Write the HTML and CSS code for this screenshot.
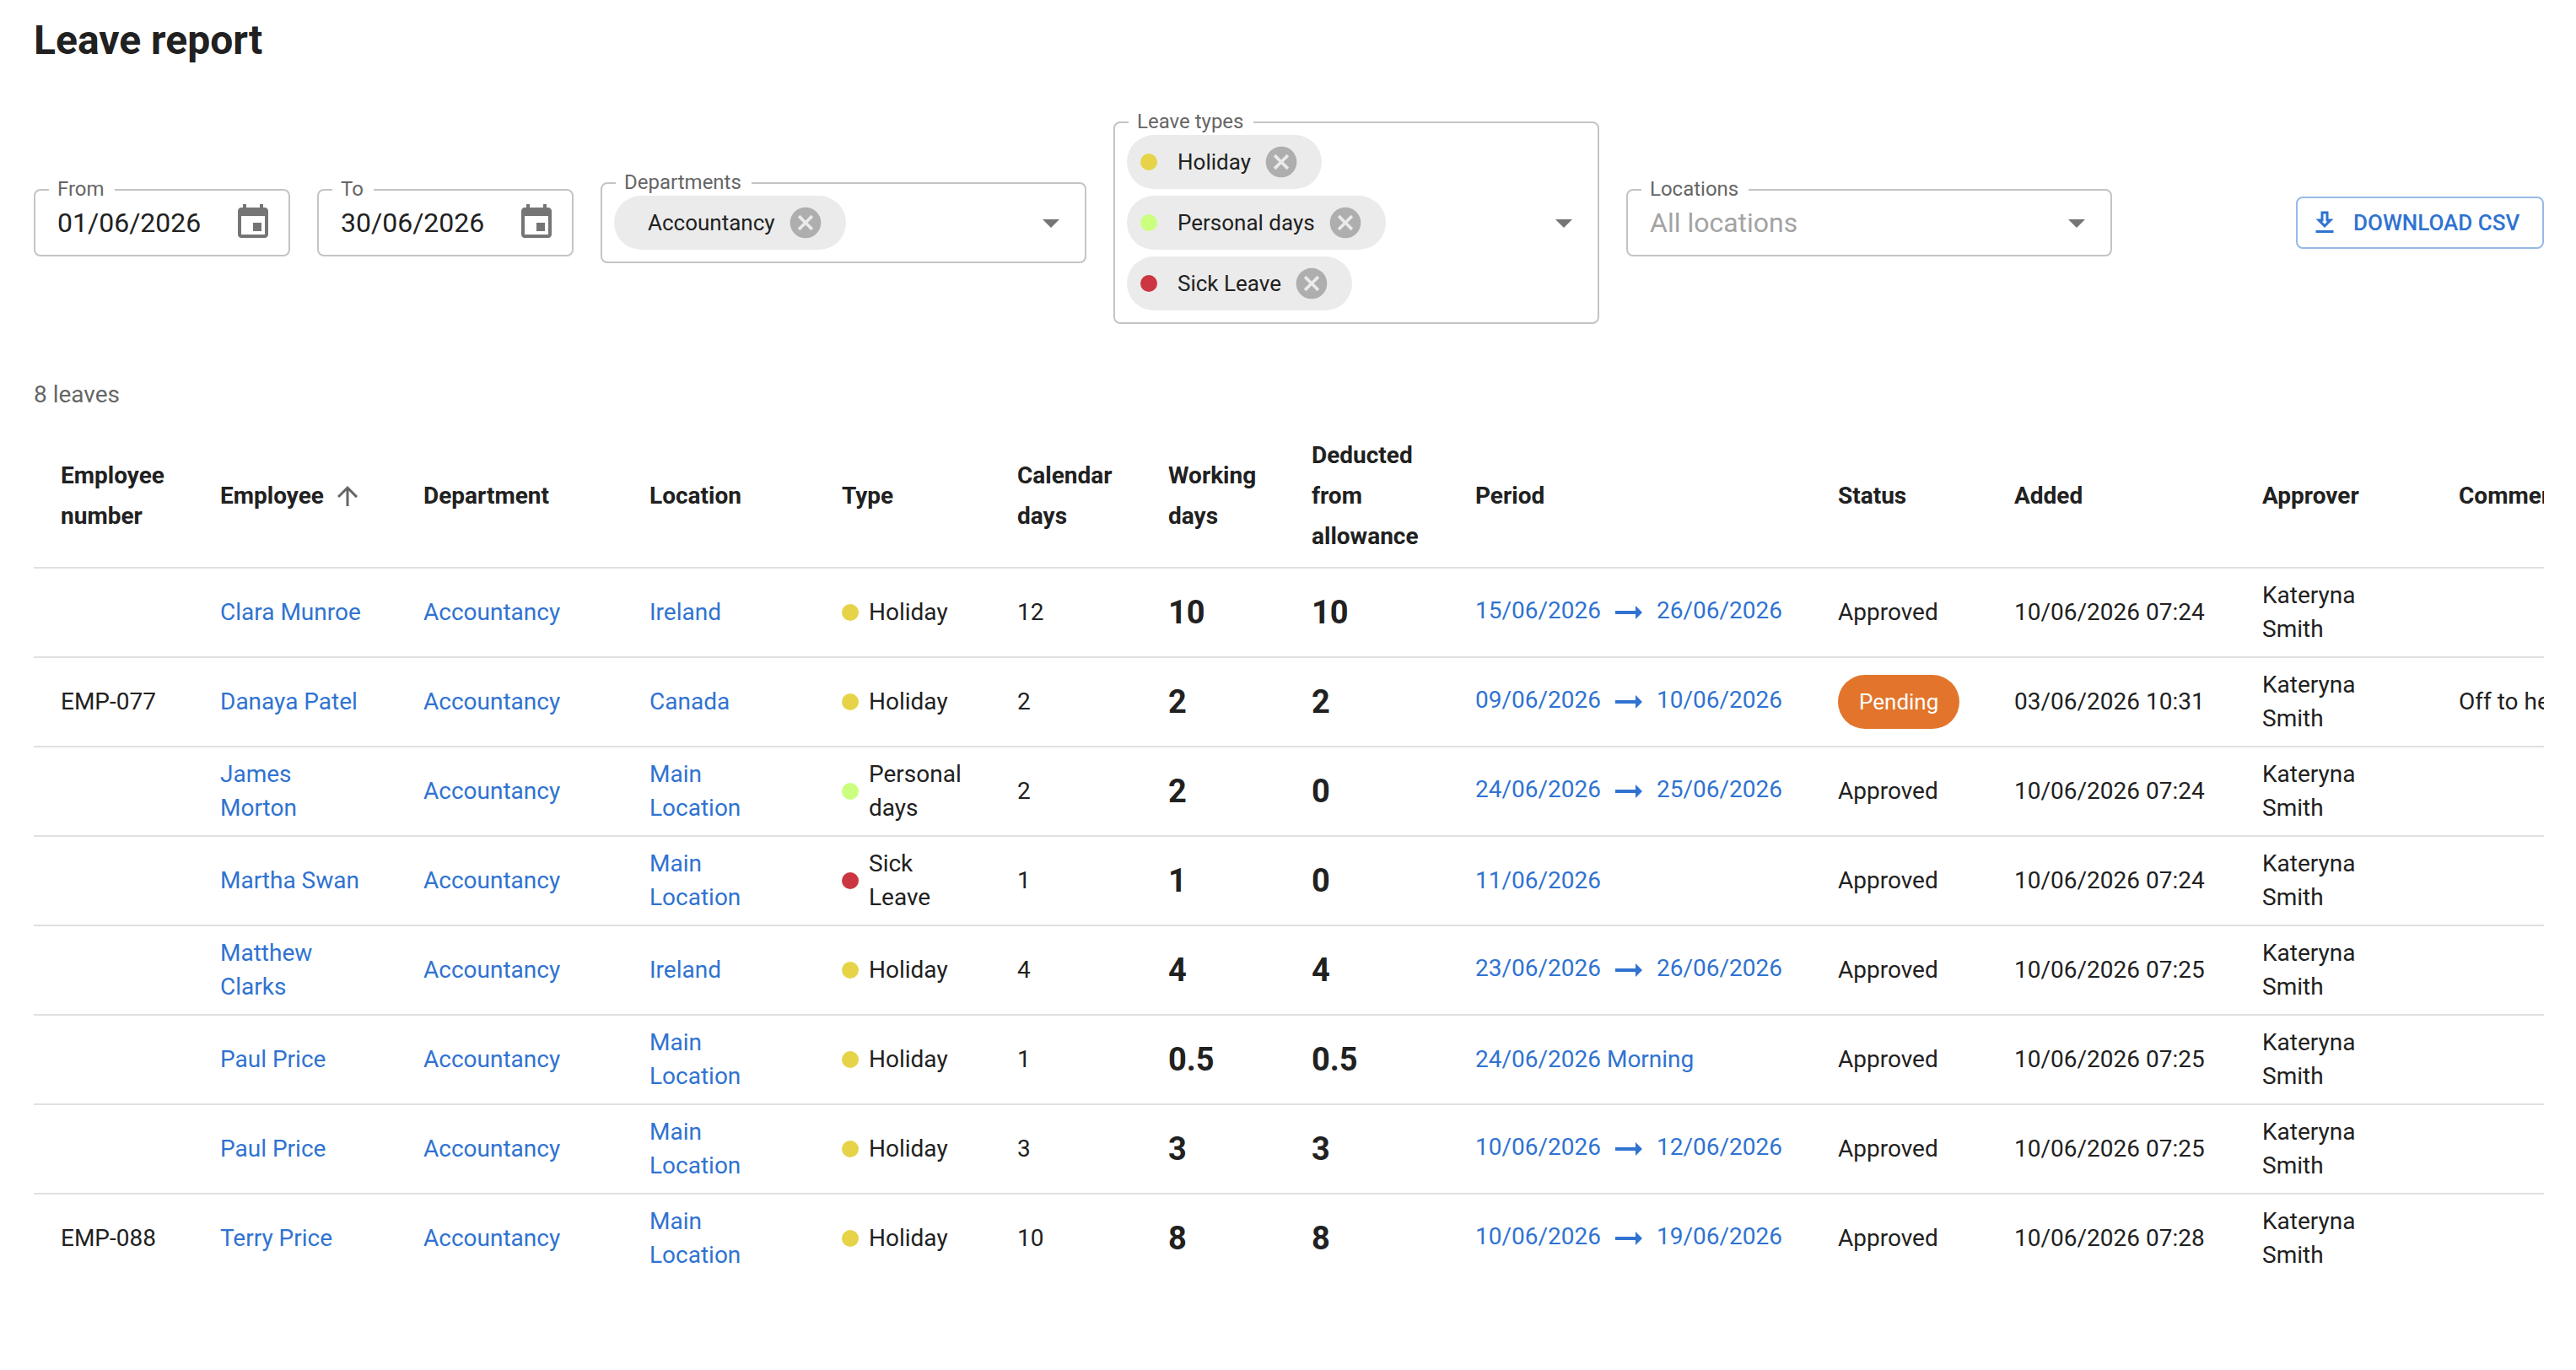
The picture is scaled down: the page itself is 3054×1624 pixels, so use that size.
FILE: index.html
```html
<!DOCTYPE html>
<html lang="en">
<head>
    <meta charset="UTF-8">
    <title>Leave report</title>
    <link rel="stylesheet" href="styles.css">
</head>
<body>

    <!-- shared icons -->
    <svg class="sprite" aria-hidden="true">
        <symbol id="icon-calendar" viewBox="0 0 24 24"><path d="M17 12h-5v5h5v-5zM16 1v2H8V1H6v2H5c-1.11 0-1.99.9-1.99 2L3 19c0 1.1.89 2 2 2h14c1.1 0 2-.9 2-2V5c0-1.1-.9-2-2-2h-1V1h-2zm3 18H5V8h14v11z"/></symbol>
        <symbol id="icon-cancel" viewBox="0 0 24 24"><path d="M12 2C6.47 2 2 6.47 2 12s4.47 10 10 10 10-4.47 10-10S17.53 2 12 2zm5 13.59L15.59 17 12 13.41 8.41 17 7 15.59 10.59 12 7 8.41 8.41 7 12 10.59 15.59 7 17 8.41 13.41 12 17 15.59z"/></symbol>
        <symbol id="icon-dropdown" viewBox="0 0 24 24"><path d="M7 10l5 5 5-5z"/></symbol>
        <symbol id="icon-download" viewBox="0 0 24 24"><path d="M19 9h-4V3H9v6H5l7 7 7-7zm-8 2V5h2v6h1.17L12 13.17 9.83 11H11zm-6 7h14v2H5v-2z"/></symbol>
        <symbol id="icon-up" viewBox="0 0 24 24"><path d="M4 12l1.41 1.41L11 7.83V20h2V7.83l5.58 5.59L20 12l-8-8-8 8z"/></symbol>
        <symbol id="icon-right" viewBox="0 0 24 24"><path d="M16.01 11H4v2h12.01v3L20 12l-3.99-4z"/></symbol>
    </svg>

    <h1>Leave report</h1>

    <form class="filters">
        <div class="field date-field">
            <label for="from">From</label>
            <input type="text" id="from" value="01/06/2026">
            <button type="button" class="icon-button" aria-label="Choose start date"><svg class="icon"><use href="#icon-calendar"/></svg></button>
        </div>

        <div class="field date-field">
            <label for="to">To</label>
            <input type="text" id="to" value="30/06/2026">
            <button type="button" class="icon-button" aria-label="Choose end date"><svg class="icon"><use href="#icon-calendar"/></svg></button>
        </div>

        <div class="field select-field">
            <label for="departments">Departments</label>
            <div class="chips">
                <span class="chip"><span class="chip-label">Accountancy</span><button type="button" aria-label="Remove Accountancy"><svg class="icon"><use href="#icon-cancel"/></svg></button></span>
            </div>
            <input type="text" id="departments">
            <button type="button" class="icon-button" aria-label="Open departments"><svg class="icon"><use href="#icon-dropdown"/></svg></button>
        </div>

        <div class="field select-field">
            <label for="types">Leave types</label>
            <div class="chips">
                <span class="chip"><span class="dot holiday"></span><span class="chip-label">Holiday</span><button type="button" aria-label="Remove Holiday"><svg class="icon"><use href="#icon-cancel"/></svg></button></span>
                <span class="chip"><span class="dot personal"></span><span class="chip-label">Personal days</span><button type="button" aria-label="Remove Personal days"><svg class="icon"><use href="#icon-cancel"/></svg></button></span>
                <span class="chip"><span class="dot sick"></span><span class="chip-label">Sick Leave</span><button type="button" aria-label="Remove Sick Leave"><svg class="icon"><use href="#icon-cancel"/></svg></button></span>
            </div>
            <input type="text" id="types">
            <button type="button" class="icon-button" aria-label="Open leave types"><svg class="icon"><use href="#icon-dropdown"/></svg></button>
        </div>

        <div class="field select-field">
            <label for="locations">Locations</label>
            <input type="text" id="locations" placeholder="All locations">
            <button type="button" class="icon-button" aria-label="Open locations"><svg class="icon"><use href="#icon-dropdown"/></svg></button>
        </div>

        <button type="button" class="download"><svg class="icon"><use href="#icon-download"/></svg>Download CSV</button>
    </form>

    <p class="count">8 leaves</p>

    <div class="table-container">
        <table>
            <colgroup>
                <col class="col-number">
                <col class="col-employee">
                <col class="col-department">
                <col class="col-location">
                <col class="col-type">
                <col class="col-calendar">
                <col class="col-working">
                <col class="col-deducted">
                <col class="col-period">
                <col class="col-status">
                <col class="col-added">
                <col class="col-approver">
                <col class="col-comment">
            </colgroup>
            <thead>
                <tr>
                    <th>Employee number</th>
                    <th><span class="sort">Employee<svg class="icon"><use href="#icon-up"/></svg></span></th>
                    <th>Department</th>
                    <th>Location</th>
                    <th>Type</th>
                    <th>Calendar days</th>
                    <th>Working days</th>
                    <th>Deducted from allowance</th>
                    <th>Period</th>
                    <th>Status</th>
                    <th>Added</th>
                    <th>Approver</th>
                    <th>Comment</th>
                </tr>
            </thead>
            <tbody>
                <tr>
                    <td></td>
                    <td><a href="#">Clara Munroe</a></td>
                    <td><a href="#">Accountancy</a></td>
                    <td><a href="#">Ireland</a></td>
                    <td><div class="type"><span class="dot holiday"></span>Holiday</div></td>
                    <td>12</td>
                    <td class="days">10</td>
                    <td class="days">10</td>
                    <td><a href="#">15/06/2026<svg class="icon arrow"><use href="#icon-right"/></svg>26/06/2026</a></td>
                    <td>Approved</td>
                    <td>10/06/2026 07:24</td>
                    <td>Kateryna Smith</td>
                    <td></td>
                </tr>
                <tr>
                    <td>EMP-077</td>
                    <td><a href="#">Danaya Patel</a></td>
                    <td><a href="#">Accountancy</a></td>
                    <td><a href="#">Canada</a></td>
                    <td><div class="type"><span class="dot holiday"></span>Holiday</div></td>
                    <td>2</td>
                    <td class="days">2</td>
                    <td class="days">2</td>
                    <td><a href="#">09/06/2026<svg class="icon arrow"><use href="#icon-right"/></svg>10/06/2026</a></td>
                    <td><span class="pending">Pending</span></td>
                    <td>03/06/2026 10:31</td>
                    <td>Kateryna Smith</td>
                    <td>Off to he</td>
                </tr>
                <tr>
                    <td></td>
                    <td><a href="#">James Morton</a></td>
                    <td><a href="#">Accountancy</a></td>
                    <td><a href="#">Main Location</a></td>
                    <td><div class="type"><span class="dot personal"></span>Personal days</div></td>
                    <td>2</td>
                    <td class="days">2</td>
                    <td class="days">0</td>
                    <td><a href="#">24/06/2026<svg class="icon arrow"><use href="#icon-right"/></svg>25/06/2026</a></td>
                    <td>Approved</td>
                    <td>10/06/2026 07:24</td>
                    <td>Kateryna Smith</td>
                    <td></td>
                </tr>
                <tr>
                    <td></td>
                    <td><a href="#">Martha Swan</a></td>
                    <td><a href="#">Accountancy</a></td>
                    <td><a href="#">Main Location</a></td>
                    <td><div class="type"><span class="dot sick"></span>Sick Leave</div></td>
                    <td>1</td>
                    <td class="days">1</td>
                    <td class="days">0</td>
                    <td><a href="#">11/06/2026</a></td>
                    <td>Approved</td>
                    <td>10/06/2026 07:24</td>
                    <td>Kateryna Smith</td>
                    <td></td>
                </tr>
                <tr>
                    <td></td>
                    <td><a href="#">Matthew Clarks</a></td>
                    <td><a href="#">Accountancy</a></td>
                    <td><a href="#">Ireland</a></td>
                    <td><div class="type"><span class="dot holiday"></span>Holiday</div></td>
                    <td>4</td>
                    <td class="days">4</td>
                    <td class="days">4</td>
                    <td><a href="#">23/06/2026<svg class="icon arrow"><use href="#icon-right"/></svg>26/06/2026</a></td>
                    <td>Approved</td>
                    <td>10/06/2026 07:25</td>
                    <td>Kateryna Smith</td>
                    <td></td>
                </tr>
                <tr>
                    <td></td>
                    <td><a href="#">Paul Price</a></td>
                    <td><a href="#">Accountancy</a></td>
                    <td><a href="#">Main Location</a></td>
                    <td><div class="type"><span class="dot holiday"></span>Holiday</div></td>
                    <td>1</td>
                    <td class="days">0.5</td>
                    <td class="days">0.5</td>
                    <td><a href="#">24/06/2026 Morning</a></td>
                    <td>Approved</td>
                    <td>10/06/2026 07:25</td>
                    <td>Kateryna Smith</td>
                    <td></td>
                </tr>
                <tr>
                    <td></td>
                    <td><a href="#">Paul Price</a></td>
                    <td><a href="#">Accountancy</a></td>
                    <td><a href="#">Main Location</a></td>
                    <td><div class="type"><span class="dot holiday"></span>Holiday</div></td>
                    <td>3</td>
                    <td class="days">3</td>
                    <td class="days">3</td>
                    <td><a href="#">10/06/2026<svg class="icon arrow"><use href="#icon-right"/></svg>12/06/2026</a></td>
                    <td>Approved</td>
                    <td>10/06/2026 07:25</td>
                    <td>Kateryna Smith</td>
                    <td></td>
                </tr>
                <tr>
                    <td>EMP-088</td>
                    <td><a href="#">Terry Price</a></td>
                    <td><a href="#">Accountancy</a></td>
                    <td><a href="#">Main Location</a></td>
                    <td><div class="type"><span class="dot holiday"></span>Holiday</div></td>
                    <td>10</td>
                    <td class="days">8</td>
                    <td class="days">8</td>
                    <td><a href="#">10/06/2026<svg class="icon arrow"><use href="#icon-right"/></svg>19/06/2026</a></td>
                    <td>Approved</td>
                    <td>10/06/2026 07:28</td>
                    <td>Kateryna Smith</td>
                    <td></td>
                </tr>
            </tbody>
        </table>
    </div>

</body>
</html>
```
FILE: styles.css
```css
* {
    box-sizing: border-box;
}

body {
    margin: 0;
    padding: 20px 38px 20px 40px;
    background-color: #fff;
    color: #212121;
    font-family: Roboto, "Open Sans", sans-serif;
    font-size: 28px;
    line-height: 40px;
}

h1 {
    margin: 0 0 68px;
    font-size: 48px;
    font-weight: 700;
    line-height: 56px;
}

a {
    color: #3073d1;
    text-decoration: none;
}

button,
input {
    font-family: inherit;
}

.sprite {
    display: none;
}

.icon {
    width: 48px;
    height: 48px;
    fill: currentColor;
    flex-shrink: 0;
}

/* filters */
.filters {
    display: flex;
    align-items: center;
    gap: 32px;
}

.field {
    position: relative;
    display: flex;
    align-items: center;
    min-height: 80px;
    border: 2px solid #c4c4c4;
    border-radius: 8px;
}

.field label {
    position: absolute;
    top: -14px;
    left: 16px;
    padding: 0 12px 0 10px;
    background-color: #fff;
    color: #666;
    font-size: 24px;
    line-height: 24px;
}

.field input {
    flex: 1;
    min-width: 0;
    height: 48px;
    padding: 0;
    border: none;
    outline: none;
    background: none;
    color: #212121;
    font-size: 32px;
}

.field input::placeholder {
    color: #a3a3a3;
    opacity: 1;
}

.date-field {
    width: 304px;
    padding: 0 18px 0 26px;
}

.select-field {
    width: 576px;
    padding: 14px 16px 14px 14px;
}

.select-field label + input {
    padding-left: 12px;
}

.icon-button,
.chip button {
    display: flex;
    padding: 0;
    border: none;
    background: none;
    color: #757575;
    cursor: pointer;
}

.chips {
    display: flex;
    flex-direction: column;
    align-items: flex-start;
    gap: 8px;
}

.chip {
    display: flex;
    align-items: center;
    height: 64px;
    padding: 0 16px;
    border-radius: 32px;
    background-color: #ebebeb;
    font-size: 26px;
}

.chip-label {
    padding: 0 14px 0 24px;
}

.chip button {
    margin-right: 10px;
    color: #aeaeae;
}

.chip .icon {
    width: 44px;
    height: 44px;
}

.dot {
    width: 20px;
    height: 20px;
    border-radius: 50%;
    flex-shrink: 0;
}

.holiday {
    background-color: #e6d347;
}

.personal {
    background-color: #caff7f;
}

.sick {
    background-color: #cb3641;
}

.download {
    display: flex;
    align-items: center;
    gap: 16px;
    min-width: 294px;
    height: 62px;
    margin-left: auto;
    padding: 0 14px;
    border: 2px solid #98b9e8;
    border-radius: 8px;
    background-color: #fff;
    color: #3073d1;
    font-size: 26px;
    font-weight: 500;
    text-transform: uppercase;
    cursor: pointer;
}

.download .icon,
.sort .icon {
    width: 36px;
    height: 36px;
}

.count {
    margin: 64px 0 16px;
    color: #666;
}

/* report table */
.table-container {
    overflow-x: auto;
    scrollbar-width: none;
}

table {
    width: 3120px;
    table-layout: fixed;
    border-collapse: separate;
    border-spacing: 0;
}

th,
td {
    padding: 12px 32px;
    border-bottom: 2px solid #e0e0e0;
    text-align: left;
    vertical-align: middle;
}

tbody tr:last-child td {
    border-bottom: none;
}

th {
    font-weight: 700;
    line-height: 48px;
}

.col-number { width: 189px; }
.col-employee { width: 241px; }
.col-department { width: 268px; }
.col-location { width: 228px; }
.col-type { width: 208px; }
.col-calendar { width: 179px; }
.col-working { width: 170px; }
.col-deducted { width: 194px; }
.col-period { width: 430px; }
.col-status { width: 209px; }
.col-added { width: 294px; }
.col-approver { width: 233px; }

.sort {
    display: flex;
    align-items: center;
    gap: 10px;
}

.sort .icon {
    color: #666;
}

.type {
    display: flex;
    align-items: center;
    gap: 12px;
}

.days {
    font-size: 38px;
    font-weight: 700;
}

.arrow {
    margin: 0 9px;
    vertical-align: middle;
}

.pending {
    display: flex;
    align-items: center;
    width: max-content;
    height: 64px;
    padding: 0 25px;
    border-radius: 32px;
    background-color: #e2752b;
    color: #fff;
    font-size: 26px;
}
```
